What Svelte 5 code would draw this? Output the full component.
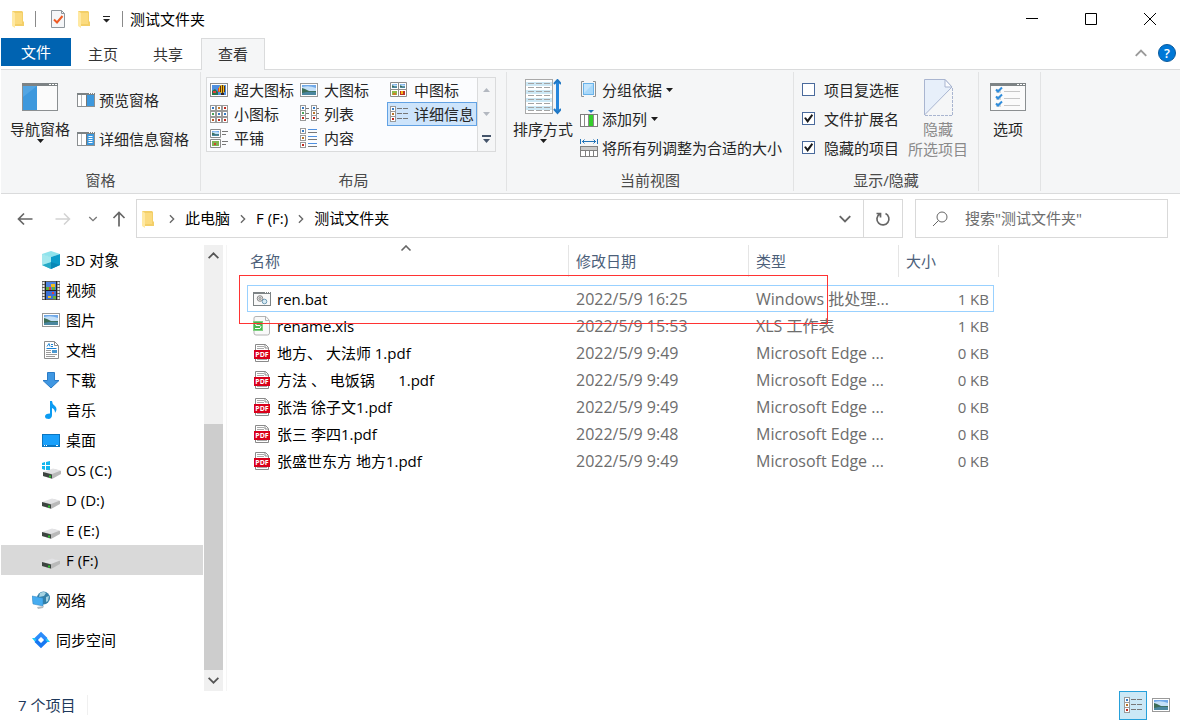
<script lang="ts">
    interface FileRow {
        name: string;
        icon: string;
        date: string;
        type: string;
        size: string;
    }

    const tabs = ["主页", "共享", "查看"];
    const path = ["此电脑", "F (F:)", "测试文件夹"];

    const layouts = [
        { label: "超大图标", icon: "huge" },
        { label: "大图标", icon: "picture" },
        { label: "中图标", icon: "medium" },
        { label: "小图标", icon: "small" },
        { label: "列表", icon: "list" },
        { label: "详细信息", icon: "details" },
        { label: "平铺", icon: "tiles" },
        { label: "内容", icon: "content" }
    ];

    const places = [
        { label: "3D 对象", icon: "cube" },
        { label: "视频", icon: "video" },
        { label: "图片", icon: "picture" },
        { label: "文档", icon: "document" },
        { label: "下载", icon: "download" },
        { label: "音乐", icon: "music" },
        { label: "桌面", icon: "desktop" },
        { label: "OS (C:)", icon: "osdrive" },
        { label: "D (D:)", icon: "drive" },
        { label: "E (E:)", icon: "drive" },
        { label: "F (F:)", icon: "drive" }
    ];

    const roots = [
        { label: "网络", icon: "network" },
        { label: "同步空间", icon: "sync" }
    ];

    const edge = "Microsoft Edge ...";
    const files: FileRow[] = [
        { name: "ren.bat", icon: "bat", date: "2022/5/9 16:25", type: "Windows 批处理...", size: "1 KB" },
        { name: "rename.xls", icon: "xls", date: "2022/5/9 15:53", type: "XLS 工作表", size: "1 KB" },
        { name: "地方、 大法师 1.pdf", icon: "pdf", date: "2022/5/9 9:49", type: edge, size: "0 KB" },
        { name: "方法 、 电饭锅      1.pdf", icon: "pdf", date: "2022/5/9 9:49", type: edge, size: "0 KB" },
        { name: "张浩 徐子文1.pdf", icon: "pdf", date: "2022/5/9 9:49", type: edge, size: "0 KB" },
        { name: "张三 李四1.pdf", icon: "pdf", date: "2022/5/9 9:48", type: edge, size: "0 KB" },
        { name: "张盛世东方 地方1.pdf", icon: "pdf", date: "2022/5/9 9:49", type: edge, size: "0 KB" }
    ];

    let activeTab = $state("查看");
    let activeLayout = $state("详细信息");
    let activePlace = $state("F (F:)");
    let activeFile = $state("ren.bat");

    let options = $state([
        { label: "项目复选框", checked: false },
        { label: "文件扩展名", checked: true },
        { label: "隐藏的项目", checked: true }
    ]);
</script>

{#snippet thumb(x: number, y: number, w: number, h: number)}
    <svg {x} {y} width={w} height={h} viewBox="0 0 14 10" preserveAspectRatio="none">
        <rect width="14" height="10" fill="#6fa8e8" />
        <path d="M0 2 Q7 0 14 3 V6 H0Z" fill="#c4e0f8" />
        <path d="M0 3 L3 4 L7 6 L14 6 V8 H0Z" fill="#3d6e58" />
        <path d="M0 8 Q7 6 14 7 V10 H0Z" fill="#4b87a0" />
    </svg>
{/snippet}

{#snippet mini(x: number, y: number, color: string)}
    <rect x={x + 0.5} y={y + 0.5} width="5" height="5" fill="#fff" stroke="#9a9a9a" />
    <rect x={x + 2} y={y + 2} width="2" height="2" fill={color} />
{/snippet}

{#snippet driveShape()}
    <path d="M0 12 L11 8 L18 10 V13 L9 18 L0 15Z" fill="#b9b9b9" />
    <path d="M0 11 L10 7.500 L18 9.500 L9 13Z" fill="#e2e2e4" />
    <path d="M0 11 L9 13.500 V17.500 L0 15Z" fill="#3c4440" />
    <path d="M6 14.500h2v2h-2z" fill="#2fc22f" />
{/snippet}

{#snippet icon(name: string)}
    {#if name === "folder"}
        <svg width="14" height="18" viewBox="0 0 14 18" aria-hidden="true">
            <path d="M1 1 H11 L12 2 V11 L13 12 V16 H3Z" fill="#f3cf68" />
            <path d="M1 1 L4 3 V18 L1 16Z" fill="#ffe9a3" />
            <path d="M4 3 H11 V14 H4Z" fill="#fbdb7f" />
        </svg>
    {:else if name === "check-page"}
        <svg width="14" height="18" viewBox="0 0 14 18" aria-hidden="true">
            <path d="M0.500 0.500 H10.500 L13.500 3.500 V17.500 H0.500Z" fill="#f5f6f8" stroke="#8f969c" />
            <path d="M10.500 0.500 V3.500 H13.500" fill="none" stroke="#8f969c" />
            <path d="M3 9.500 L6 12.500 L11.500 6" fill="none" stroke="#ee5a24" stroke-width="2" />
        </svg>
    {:else if name === "nav-pane"}
        <svg width="36" height="28" viewBox="0 0 36 28" aria-hidden="true">
            <rect x="0.500" y="0.500" width="35" height="27" fill="#fbfbfb" stroke="#8b8f91" />
            <rect width="36" height="3" fill="#7d8385" />
            <path d="M27 1h2v1h-2zM30 1h2v1h-2zM33 1h2v1h-2z" fill="#fff" />
            <rect x="1" y="3" width="14" height="24" fill="#3d98dd" />
            <path d="M1 3 H15 L1 14Z" fill="#52a5e3" />
        </svg>
    {:else if name === "preview-pane" || name === "details-pane"}
        <svg width="18" height="14" viewBox="0 0 18 14" aria-hidden="true">
            <rect x="0.500" y="0.500" width="17" height="13" fill="#fff" stroke="#8b8f91" />
            <rect width="18" height="2" fill="#7d8385" />
            <path d="M12 0h1v1h-1zM14 0h1v1h-1zM16 0h1v1h-1z" fill="#fff" />
            <path d="M4.500 2v11" stroke="#b5b9bb" />
            <rect x="10" y="2" width="7" height="11" fill="#3d98dd" />
            <path d="M9.500 2v11" stroke="#777" />
            {#if name === "details-pane"}
                <path d="M11.500 4.500h4M11.500 6.500h4M11.500 8.500h4M11.500 10.500h4" stroke="#fff" />
            {/if}
        </svg>
    {:else if name === "huge"}
        <svg width="18" height="14" viewBox="0 0 18 14" aria-hidden="true">
            <rect x="0.500" y="0.500" width="17" height="13" fill="#fff" stroke="#8c8c8c" />
            <rect x="2" y="2" width="14" height="10" fill="#4f8fe0" />
            <path d="M2 8 L5 6 L8 9 V12 H2Z" fill="#28734a" />
            <path d="M3 8h3v2h-3zM8 5h2v4h-2z" fill="#e3413c" />
            <ellipse cx="12" cy="6" rx="3" ry="4" fill="#f6bd12" />
            <path d="M10.500 3v6M12.500 2v8M14.500 3v6" stroke="#5b3210" />
            <path d="M11 10h3v2h-3z" fill="#322" />
        </svg>
    {:else if name === "picture"}
        <svg width="18" height="14" viewBox="0 0 18 14" aria-hidden="true">
            <rect x="0.500" y="0.500" width="17" height="13" fill="#fff" stroke="#999" />
            {@render thumb(2, 2, 14, 10)}
        </svg>
    {:else if name === "medium"}
        <svg width="18" height="16" viewBox="0 0 18 16" aria-hidden="true">
            <path d="M0.500 0.500h8v7h-8zM8.500 0.500h8v7h-8zM0.500 7.500h8v7h-8zM8.500 7.500h8v7h-8z" fill="#fff" stroke="#8c8c8c" />
            {@render thumb(2, 2, 5, 4)}
            {@render thumb(10, 2, 5, 4)}
            <path d="M2 9h5v4h-5z" fill="#8fbb49" />
            <path d="M3 11h3v2h-3z" fill="#d07b2d" />
            <path d="M10 9h5v4h-5z" fill="#bb3326" />
            <path d="M11 9h2v3h-2z" fill="#f4b91c" />
        </svg>
    {:else if name === "small"}
        <svg width="19" height="18" viewBox="0 0 19 18" aria-hidden="true">
            {#each [0, 6, 12] as y, i}
                {@render mini(0, y, ["#377bc4", "#4aa35b", "#b95a2b"][i])}
                {@render mini(6, y, ["#c57a2a", "#377bc4", "#c02b20"][i])}
                {@render mini(12, y, ["#c02b20", "#377bc4", "#c02b20"][i])}
            {/each}
        </svg>
    {:else if name === "list"}
        <svg width="19" height="18" viewBox="0 0 19 18" aria-hidden="true">
            {#each [0, 5, 10] as y, i}
                {@render mini(0, y, ["#377bc4", "#4aa35b", "#c02b20"][i])}
                {@render mini(11, y, ["#377bc4", "#b9762b", "#c02b20"][i])}
            {/each}
            <path d="M6 3.500h3M6 8.500h3M6 13.500h3M17 3.500h2M17 8.500h2M17 13.500h2" stroke="#777" />
        </svg>
    {:else if name === "details"}
        <svg width="18" height="16" viewBox="0 0 18 16" aria-hidden="true">
            {#each [0, 5, 10] as y, i}
                {@render mini(0, y, ["#377bc4", "#b9762b", "#c02b20"][i])}
            {/each}
            <path d="M7 2.500h5M13 2.500h5M7 7.500h5M13 7.500h5M7 12.500h5M13 12.500h5" stroke="#777" />
        </svg>
    {:else if name === "tiles"}
        <svg width="18" height="19" viewBox="0 0 18 19" aria-hidden="true">
            <path d="M0.500 0.500h10v8h-10zM0.500 10.500h10v8h-10z" fill="#fff" stroke="#8c8c8c" />
            {@render thumb(2, 2, 7, 5)}
            <path d="M2 12h7v5h-7z" fill="#7fb452" />
            <path d="M4 14h2v2h-2z" fill="#d0442d" />
            <path d="M12 2.500h6M12 5.500h4M12 12.500h6M12 15.500h4" stroke="#777" />
        </svg>
    {:else if name === "content"}
        <svg width="18" height="20" viewBox="0 0 18 20" aria-hidden="true">
            {#each [0, 7, 14] as y, i}
                {@render mini(0, y, ["#377bc4", "#b9762b", "#c02b20"][i])}
            {/each}
            <path d="M8 1.500h9M8 8.500h9M8 15.500h9" stroke="#4e8fe0" />
            <path d="M8 4.500h9M8 11.500h9M8 18.500h9" stroke="#777" />
        </svg>
    {:else if name === "sort"}
        <svg width="36" height="36" viewBox="0 0 36 36" aria-hidden="true">
            <rect x="0.500" y="0.500" width="27" height="34" fill="#fff" stroke="#a9a9a9" />
            <path d="M1 3h26v4h-26zM1 11h26v4h-26zM1 19h26v4h-26zM1 27h26v4h-26z" fill="#cde8f5" />
            <path d="M3 4.500h22M3 8.500h22M3 12.500h22M3 16.500h22M3 20.500h22M3 24.500h22M3 28.500h22M3 31.500h22" stroke="#a3a3a3" stroke-dasharray="6 2" />
            <path d="M32.500 2v31" stroke="#2686dc" stroke-width="3" />
            <path d="M29 5 L32.500 1 L36 5M29 30 L32.500 34 L36 30" fill="none" stroke="#2178c4" stroke-width="2" />
        </svg>
    {:else if name === "group"}
        <svg width="18" height="17" viewBox="0 0 18 17" aria-hidden="true">
            <path d="M4 0.500H1.500V15.500H4M13 0.500h2.500V15.500H13" fill="none" stroke="#8f9294" />
            <rect x="3.500" y="2.500" width="10" height="11" fill="#a8d8fa" stroke="#69b3ea" />
            <path d="M4 3h9L4 12z" fill="#c3e5fd" />
        </svg>
    {:else if name === "add-column"}
        <svg width="18" height="17" viewBox="0 0 18 17" aria-hidden="true">
            <path d="M8 0h6l-3 3z" fill="#2273b8" />
            <rect x="0.500" y="4.500" width="17" height="12" fill="#fff" stroke="#7d7d7d" />
            <path d="M4.500 5v11M8.500 5v11M13.500 5v11" stroke="#8b8b8b" />
            <rect x="9" y="5" width="4" height="11" fill="#35cf2c" />
        </svg>
    {:else if name === "fit-columns"}
        <svg width="18" height="18" viewBox="0 0 18 18" aria-hidden="true">
            <path d="M0.500 0v5M17.500 0v5M2 2.500h14M4.500 0.500l-2 2l2 2M13.500 0.500l2 2l-2 2" fill="none" stroke="#2273b8" />
            <rect x="0.500" y="7.500" width="17" height="10" fill="#fff" stroke="#808080" />
            <path d="M1 8h16v3H1z" fill="#c9c9c9" />
            <path d="M1 11.500h16M5.500 12v5M9.500 12v5M13.500 12v5" stroke="#808080" />
        </svg>
    {:else if name === "hide"}
        <svg width="29" height="37" viewBox="0 0 29 37" aria-hidden="true">
            <path d="M0.500 36V0.500H21L28 8Z" fill="#e7effa" stroke="#a9b5d0" />
            <path d="M21 0.500V8H28Z" fill="#fafbfe" stroke="#a9b5d0" />
            <path d="M28.500 9V36.500H1" fill="none" stroke="#a9b5d0" stroke-dasharray="3 1" />
        </svg>
    {:else if name === "options"}
        <svg width="36" height="28" viewBox="0 0 36 28" aria-hidden="true">
            <rect x="0.500" y="0.500" width="35" height="27" fill="#fbfbfb" stroke="#8b8f91" />
            <rect width="36" height="3" fill="#7d8385" />
            <path d="M27 1h2v1h-2zM30 1h2v1h-2zM33 1h2v1h-2z" fill="#fff" />
            <path d="M6 6h5v4h-5zM6 13h5v4h-5zM6 20h5v4h-5z" fill="#d3d8dc" />
            <path d="M6 6.500l2 2l4-4M6 13.500l2 2l4-4M6 20.500l2 2l4-4" fill="none" stroke="#2f8ddc" stroke-width="2" />
            <path d="M14 8.500h16M14 15.500h16M14 22.500h16" stroke="#c7c7c7" />
        </svg>
    {:else if name === "cube"}
        <svg width="18" height="18" viewBox="0 0 18 18" aria-hidden="true">
            <path d="M0 3 L9 0 L18 3 L9 6Z" fill="#8fe3ec" />
            <path d="M0 3 L9 6 V18 L0 14Z" fill="#58ccdc" />
            <path d="M9 6 L18 3 V14 L9 18Z" fill="#0c9cc9" />
            <path d="M0 14 L9 11 L9 18Z" fill="#25a9c6" />
            <path d="M9 11 L18 14 L9 18Z" fill="#0888b6" />
            <path d="M0 3 L9 6 L9 11 L0 14Z" fill="#a3e8ee" />
        </svg>
    {:else if name === "video"}
        <svg width="18" height="19" viewBox="0 0 18 19" aria-hidden="true">
            <rect width="18" height="19" fill="#5f5f5f" />
            <rect x="4" y="1" width="10" height="8" fill="#4d82e0" />
            <rect x="4" y="10" width="10" height="8" fill="#3c71d6" />
            <path d="M1.500 1v18M16.500 1v18" stroke="#eee" stroke-width="2" stroke-dasharray="2 1" />
            <path d="M3.500 0v19M14.500 0v19M4 9.500h10" stroke="#222" />
            <path d="M9 3h4v3h-4zM6 15h3v2h-3z" fill="#f1be20" />
            <path d="M4 6h4v3h-4zM10 6h3v3h-3zM11 15h3v3h-3z" fill="#5fae3b" />
            <path d="M7 6h2v3h-2zM10 11h2v2h-2z" fill="#e03f34" />
        </svg>
    {:else if name === "document"}
        <svg width="16" height="18" viewBox="0 0 16 18" aria-hidden="true">
            <path d="M1.500 0.500H11.500L15.500 4.500V17.500H1.500Z" fill="#fff" stroke="#8c8c8c" />
            <path d="M11.500 0.500V4.500H15" fill="none" stroke="#8c8c8c" />
            <path d="M4 5.500l2-3l1 3M8 3.500h2M8 5.500h2M3.500 7.500h10" fill="none" stroke="#1a82d4" />
            <path d="M3 9.500h5M3 11.500h5M3 13.500h11M3 15.500h9" stroke="#9a9a9a" />
            <path d="M9 9h5v3h-5z" fill="#4b98d0" />
        </svg>
    {:else if name === "download"}
        <svg width="18" height="18" viewBox="0 0 18 18" aria-hidden="true">
            <path d="M5.500 1.500h7v8h4.500L9 17L1 9.500h4.500Z" fill="#3f97e2" stroke="#2a7bc6" />
        </svg>
    {:else if name === "music"}
        <svg width="18" height="18" viewBox="0 0 18 18" aria-hidden="true">
            <path d="M8 0h2q0 3 3 5q3 3 0 7q0-4-3-5v7q0 3-3 4q-4 0-4-2.500q0-3 5-3Z" fill="#0c9cf2" />
        </svg>
    {:else if name === "desktop"}
        <svg width="18" height="13" viewBox="0 0 18 13" aria-hidden="true">
            <rect x="0.500" y="0.500" width="17" height="12" fill="#19a0fb" stroke="#0b76c0" />
            <path d="M1 11.500h16" stroke="#0b76c0" />
            <path d="M2 11.500h1M4 11.500h1M14 11.500h2" stroke="#fff" />
        </svg>
    {:else if name === "osdrive"}
        <svg width="19" height="19" viewBox="0 0 19 19" aria-hidden="true">
            <g transform="translate(1 0)">{@render driveShape()}</g>
            <path d="M0 2l3-1v3H0zM4 1l4-1v4H4zM0 5h3v4l-3-1zM4 5h4v4H4z" fill="#12b6ee" />
        </svg>
    {:else if name === "drive"}
        <svg width="18" height="19" viewBox="0 0 18 19" aria-hidden="true">
            {@render driveShape()}
        </svg>
    {:else if name === "network"}
        <svg width="18" height="18" viewBox="0 0 18 18" aria-hidden="true">
            <circle cx="11.500" cy="7" r="6.500" fill="#3580a8" />
            <path d="M8 2q4-2 6 0l-2 3l-5 1zM14 6l3-1l-1 5l-2 1z" fill="#a5d3e2" />
            <path d="M0 5l11 2v8L1 13Z" fill="#46acf0" stroke="#2d82bd" stroke-width="0.500" />
            <path d="M5 16l7-1l-1 2l-5 1z" fill="#b2babf" />
        </svg>
    {:else if name === "sync"}
        <svg width="18" height="18" viewBox="0 0 18 18" aria-hidden="true">
            <path d="M0 7h4l2 3l-2 2zM18 11h-4l-2-3l2-2z" fill="#1fc8f8" />
            <path d="M4 8.500l5-5l5 5" fill="none" stroke="#2b8cfa" stroke-width="4" />
            <path d="M14 9.500l-5 5l-5-5" fill="none" stroke="#1778f2" stroke-width="4" />
            <path d="M9 6l3 3l-3 3l-3-3z" fill="#fff" />
        </svg>
    {:else if name === "bat"}
        <svg width="18" height="14" viewBox="0 0 18 14" aria-hidden="true">
            <rect x="0.500" y="0.500" width="17" height="13" fill="#f9f9f9" stroke="#7d8385" />
            <rect width="18" height="2" fill="#7d8385" />
            <path d="M12 0h1v1h-1zM14 0h1v1h-1zM16 0h1v1h-1z" fill="#fff" />
            <circle cx="7" cy="6.500" r="2.800" fill="#e6e6e6" stroke="#8b8b8b" />
            <circle cx="7" cy="6.500" r="1" fill="#fff" stroke="#888" />
            <circle cx="11.500" cy="9.500" r="2.300" fill="#d7eaf4" stroke="#6e9bb5" />
        </svg>
    {:else if name === "xls"}
        <svg width="18" height="20" viewBox="0 0 18 20" aria-hidden="true">
            <path d="M3 0.500H13L16.500 4.500V17q0 2-2 2H3q-2 0-2-2V2q0-1.500 2-1.500Z" fill="#f9f9f9" stroke="#b3b3b3" />
            <path d="M12.500 1V4.500H16" fill="none" stroke="#b3b3b3" />
            <rect x="0.500" y="5.500" width="9" height="9" fill="#48b64d" stroke="#7ecf80" />
            <path d="M8 7.500H4q-2 0-1 2h4q2 1 0 3H2" fill="none" stroke="#fff" />
        </svg>
    {:else if name === "pdf"}
        <svg width="18" height="18" viewBox="0 0 18 18" aria-hidden="true">
            <path d="M2.500 0.500H12.500L15.500 3.500V17.500H2.500Z" fill="#fff" stroke="#8a8a8a" />
            <path d="M12 0.500V4H15" fill="none" stroke="#8a8a8a" />
            <path d="M4 2.500h7M4 4.500h7M4 15.500h10" stroke="#aaa" />
            <rect x="1" y="6" width="16" height="9" fill="#d9001b" />
            <text x="9" y="13" fill="#fff" font-size="7" font-weight="700" text-anchor="middle">PDF</text>
        </svg>
    {:else if name === "arrow"}
        <svg width="7" height="4" viewBox="0 0 7 4" aria-hidden="true">
            <path d="M0 0h7L3.500 4z" fill="#1d1d1d" />
        </svg>
    {/if}
{/snippet}

{#snippet chevron(turn: string, size: number, color: string)}
    <svg class="chevron {turn}" width={size} height={size} viewBox="0 0 12 12" aria-hidden="true">
        <path d="M1.500 3.500l4.500 4.500l4.500-4.500" fill="none" stroke={color} stroke-width="1.600" />
    </svg>
{/snippet}

<div class="window">
    <header class="titlebar">
        <div class="quick">
            {@render icon("folder")}
            <span class="bar"></span>
            <button aria-label="属性">{@render icon("check-page")}</button>
            <button aria-label="新建文件夹">{@render icon("folder")}</button>
            <button class="customize" aria-label="自定义快速访问工具栏">
                <svg width="7" height="7" viewBox="0 0 7 7" aria-hidden="true">
                    <path d="M0 0h7v1H0zM0 3h7L3.500 6.500z" fill="#222" />
                </svg>
            </button>
            <span class="bar"></span>
        </div>
        <h1>测试文件夹</h1>
        <div class="controls">
            <button aria-label="最小化"><svg width="12" height="12" viewBox="0 0 12 12"><path d="M0 5.500h12" stroke="#000" /></svg></button>
            <button aria-label="最大化"><svg width="12" height="12" viewBox="0 0 12 12"><path d="M0.500 0.500h11v11h-11z" fill="none" stroke="#000" /></svg></button>
            <button aria-label="关闭"><svg width="12" height="12" viewBox="0 0 12 12"><path d="M0 0l12 12M12 0L0 12" stroke="#000" /></svg></button>
        </div>
    </header>

    <nav class="tabs">
        <button class="file-tab">文件</button>
        {#each tabs as tab}
            <button class="tab" class:active={tab === activeTab} onclick={() => (activeTab = tab)}>{tab}</button>
        {/each}
        <div class="help">
            <button aria-label="最小化功能区">{@render chevron("up", 14, "#9a9a9a")}</button>
            <button aria-label="帮助">
                <svg width="18" height="18" viewBox="0 0 18 18">
                    <circle cx="9" cy="9" r="8.500" fill="#0078d7" stroke="#0b5a9c" />
                    <text x="9" y="14" fill="#fff" font-size="13" font-weight="600" text-anchor="middle">?</text>
                </svg>
            </button>
        </div>
    </nav>

    <section class="ribbon">
        <div class="group">
            <div class="tools">
                <button class="big">
                    <span class="pic">{@render icon("nav-pane")}</span>
                    <span>导航窗格</span>
                    {@render icon("arrow")}
                </button>
                <div class="stack tall">
                    <button>{@render icon("preview-pane")}预览窗格</button>
                    <button>{@render icon("details-pane")}详细信息窗格</button>
                </div>
            </div>
            <h2>窗格</h2>
        </div>

        <div class="group">
            <div class="tools layout">
                <div class="gallery">
                    <div class="choices">
                        {#each layouts as item}
                            <button class:active={item.label === activeLayout} onclick={() => (activeLayout = item.label)}>
                                <span class="cell-icon">{@render icon(item.icon)}</span>{item.label}
                            </button>
                        {/each}
                    </div>
                    <div class="steps">
                        <button aria-label="上一行"><svg width="7" height="4" viewBox="0 0 7 4"><path d="M0 4h7L3.500 0z" fill="#b3b8c0" /></svg></button>
                        <button aria-label="下一行"><svg width="7" height="4" viewBox="0 0 7 4"><path d="M0 0h7L3.500 4z" fill="#b3b8c0" /></svg></button>
                        <button aria-label="更多"><svg width="9" height="9" viewBox="0 0 9 9"><path d="M0 1h9v2H0zM1 5h7L4.500 9z" fill="#44546a" /></svg></button>
                    </div>
                </div>
            </div>
            <h2>布局</h2>
        </div>

        <div class="group">
            <div class="tools view">
                <button class="big">
                    <span class="pic">{@render icon("sort")}</span>
                    <span>排序方式</span>
                    {@render icon("arrow")}
                </button>
                <div class="stack">
                    <button>{@render icon("group")}分组依据{@render icon("arrow")}</button>
                    <button>{@render icon("add-column")}添加列{@render icon("arrow")}</button>
                    <button>{@render icon("fit-columns")}将所有列调整为合适的大小</button>
                </div>
            </div>
            <h2>当前视图</h2>
        </div>

        <div class="group">
            <div class="tools show">
                <div class="stack">
                    {#each options as option}
                        <label><input type="checkbox" bind:checked={option.checked} />{option.label}</label>
                    {/each}
                </div>
                <button class="big" disabled>
                    <span class="pic">{@render icon("hide")}</span>
                    <span>隐藏<br />所选项目</span>
                </button>
            </div>
            <h2>显示/隐藏</h2>
        </div>

        <div class="group">
            <div class="tools last">
                <button class="big">
                    <span class="pic">{@render icon("options")}</span>
                    <span>选项</span>
                </button>
            </div>
        </div>
    </section>

    <div class="navbar">
        <div class="history">
            <button aria-label="后退"><svg width="16" height="14" viewBox="0 0 16 14"><path d="M15.500 7H1.500M7 1.500L1.500 7L7 12.500" fill="none" stroke="#666" stroke-width="1.700" /></svg></button>
            <button aria-label="前进"><svg width="16" height="14" viewBox="0 0 16 14"><path d="M0.500 7H14.500M9 1.500L14.500 7L9 12.500" fill="none" stroke="#d2d2d2" stroke-width="1.500" /></svg></button>
            <button class="recent" aria-label="最近浏览的位置">{@render chevron("down", 10, "#777")}</button>
            <button aria-label="上移"><svg width="14" height="16" viewBox="0 0 14 16"><path d="M7 15.500V1.500M1.500 7L7 1.500L12.500 7" fill="none" stroke="#666" stroke-width="1.700" /></svg></button>
        </div>
        <div class="address">
            <span class="root-icon">{@render icon("folder")}</span>
            {#each path as part}
                {@render chevron("right", 10, "#666")}
                <a href="#top">{part}</a>
            {/each}
            <button class="drop" aria-label="以前的位置">{@render chevron("down", 14, "#666")}</button>
            <button class="reload" aria-label="刷新">
                <svg width="16" height="16" viewBox="0 0 16 16">
                    <path d="M10.500 2.500A6 6 0 1 1 4.500 3M1.500 2.500H5.500V6.500" fill="none" stroke="#666" stroke-width="1.700" />
                </svg>
            </button>
        </div>
        <label class="search">
            <svg width="16" height="16" viewBox="0 0 16 16" aria-hidden="true">
                <circle cx="10" cy="6" r="5" fill="none" stroke="#666" />
                <path d="M6.500 9.500L1 15" stroke="#666" />
            </svg>
            <input type="text" aria-label="搜索" placeholder={'搜索"测试文件夹"'} />
        </label>
    </div>

    <main>
        <aside>
            <ul>
                {#each places as place}
                    <li><a href="#top" class:active={place.label === activePlace} onclick={() => (activePlace = place.label)}><span class="cell-icon">{@render icon(place.icon)}</span>{place.label}</a></li>
                {/each}
                {#each roots as root}
                    <li class="root"><a href="#top"><span class="cell-icon">{@render icon(root.icon)}</span>{root.label}</a></li>
                {/each}
            </ul>
            <div class="scrollbar">
                <button aria-label="向上滚动">{@render chevron("up", 13, "#555")}</button>
                <div class="track"><div class="handle"></div></div>
                <button aria-label="向下滚动">{@render chevron("down", 13, "#555")}</button>
            </div>
        </aside>

        <section class="files">
            <table>
                <colgroup>
                    <col class="c-name" />
                    <col class="c-date" />
                    <col class="c-type" />
                    <col class="c-size" />
                    <col class="c-end" />
                </colgroup>
                <thead>
                    <tr>
                        <th class="first">名称<span class="sorted">{@render chevron("up", 12, "#666")}</span></th>
                        <th>修改日期</th>
                        <th>类型</th>
                        <th class="size-head">大小</th>
                        <td class="end"></td>
                    </tr>
                </thead>
                <tbody>
                    {#each files as file}
                        <tr class:selected={file.name === activeFile} onclick={() => (activeFile = file.name)}>
                            <td class="name"><div><span class="cell-icon">{@render icon(file.icon)}</span>{file.name}</div></td>
                            <td class="meta">{file.date}</td>
                            <td class="meta">{file.type}</td>
                            <td class="size">{file.size}</td>
                        </tr>
                    {/each}
                </tbody>
            </table>
            <div class="marker"></div>
        </section>
    </main>

    <footer>
        <span class="count">{files.length} 个项目</span>
        <div class="modes">
            <button class="active" aria-label="详细信息">{@render icon("details")}</button>
            <button aria-label="大缩略图">{@render icon("picture")}</button>
        </div>
    </footer>
</div>

<style>
    :global(body) {
        margin: 0;
        background: #fff;
    }

    .window {
        display: flex;
        flex-direction: column;
        box-sizing: border-box;
        min-height: 100vh;
        padding: 0 1px;
        font: 15px/20px "Open Sans", "Noto Sans CJK SC", sans-serif;
        color: #000;
    }

    button {
        display: flex;
        align-items: center;
        justify-content: center;
        margin: 0;
        padding: 0;
        border: 0;
        background: none;
        color: inherit;
        font: inherit;
        white-space: nowrap;
    }

    a {
        color: inherit;
        text-decoration: none;
    }

    h1, h2 {
        margin: 0;
        font-size: 15px;
        font-weight: 400;
    }

    svg {
        display: block;
        flex: none;
    }

    .up { transform: rotate(180deg); }
    .right { transform: rotate(-90deg); }

    .cell-icon {
        display: flex;
        flex: none;
        align-items: center;
        justify-content: center;
        width: 18px;
    }

    /* title bar */
    .titlebar {
        display: flex;
        align-items: center;
        height: 38px;
    }

    .quick {
        display: flex;
        align-items: center;
        gap: 12px;
        padding-left: 10px;
    }

    .bar {
        width: 1px;
        height: 16px;
        margin: 0 3px 0 -2px;
        background: #8a8a8a;
    }

    .quick .bar:last-child {
        margin: 0;
    }

    h1 {
        padding-left: 7px;
    }

    .controls {
        display: flex;
        align-self: stretch;
        margin-left: auto;
        padding-right: 1px;
    }

    .controls button {
        width: 59px;
    }

    /* tabs */
    .tabs {
        display: flex;
        gap: 1px;
        height: 32px;
        box-sizing: border-box;
        border-bottom: 1px solid #dadbdc;
        color: #333;
    }

    .file-tab {
        height: 28px;
        margin-right: -1px;
        padding: 0 20px;
        background: #0063b1;
        color: #fff;
    }

    .tab {
        box-sizing: border-box;
        height: 32px;
        padding: 0 16px 2px;
        border: 1px solid transparent;
        border-bottom: 0;
    }

    .tab.active {
        border-color: #dadbdc;
        background: #f5f6f7;
    }

    .help {
        display: flex;
        gap: 10px;
        margin-left: auto;
        padding: 0 4px 2px 0;
    }

    /* ribbon */
    .ribbon {
        display: flex;
        height: 123px;
        border-bottom: 1px solid #dadbdc;
        background: #f5f6f7;
        color: #262626;
    }

    .group {
        display: flex;
        flex-direction: column;
        margin: 2px 0;
        border-right: 1px solid #e2e3e4;
    }

    .group h2 {
        padding-bottom: 1px;
        text-align: center;
        color: #4a4a4a;
    }

    .tools {
        display: flex;
        flex: 1;
        gap: 7px;
        padding: 3px 11px 0 9px;
    }

    .tools.layout {
        padding: 5px 10px 0 5px;
    }

    .tools.view {
        padding: 3px 11px 0 6px;
    }

    .tools.show {
        gap: 9px;
        padding: 3px 10px 0 8px;
    }

    .tools.last {
        padding: 3px 14px 0 11px;
    }

    .big {
        flex-direction: column;
        justify-content: flex-start;
        padding-top: 4px;
    }

    .big:disabled {
        color: #8a8a8a;
    }

    .pic {
        display: flex;
        align-items: center;
        justify-content: center;
        width: 36px;
        height: 36px;
        margin-bottom: 4px;
    }

    .stack button, .stack label {
        display: flex;
        align-items: center;
        justify-content: flex-start;
        gap: 4px;
        height: 29px;
    }

    .stack.tall {
        padding-top: 5px;
    }

    .stack.tall button {
        height: 39px;
    }

    .stack label {
        gap: 9px;
    }

    input[type="checkbox"] {
        display: grid;
        place-content: center;
        box-sizing: border-box;
        width: 13px;
        height: 13px;
        margin: 0;
        border: 1px solid #4a6a9c;
        background: #fff;
        appearance: none;
    }

    input[type="checkbox"]:checked::before {
        content: "";
        width: 9px;
        height: 9px;
        background: #1a1a1a;
        clip-path: polygon(0 45%, 20% 35%, 38% 62%, 85% 0, 100% 18%, 40% 100%);
    }

    .gallery {
        display: flex;
        height: 73px;
        border: 1px solid #dadbdc;
        background: #fbfcfe;
    }

    .choices {
        display: grid;
        grid-template-columns: repeat(3, 90px);
        grid-auto-rows: 24px;
    }

    .choices button {
        justify-content: flex-start;
        gap: 6px;
        box-sizing: border-box;
        padding-left: 2px;
        border: 1px solid transparent;
    }

    .choices button.active {
        border-color: #62a2e4;
        background: #cde4fb;
    }

    .steps {
        display: grid;
        grid-template-rows: 1fr 1fr 1fr;
        width: 17px;
        border-left: 1px solid #dadbdc;
        background: #f5f6f7;
    }

    /* address row */
    .navbar {
        display: flex;
        gap: 12px;
        padding: 5px 12px 6px 16px;
    }

    .history {
        display: flex;
        align-items: center;
        gap: 22px;
        margin-right: -2px;
    }

    .recent {
        margin: 0 -8px 0 -5px;
    }

    .address, .search {
        display: flex;
        align-items: center;
        box-sizing: border-box;
        height: 39px;
        border: 1px solid #d9d9d9;
    }

    .address {
        flex: 1;
        gap: 8px;
        padding-left: 4px;
    }

    .address a {
        padding-bottom: 2px;
    }

    .root-icon {
        padding-right: 4px;
    }

    .drop {
        margin-left: auto;
    }

    .reload {
        align-self: stretch;
        width: 39px;
        margin-left: 3px;
        border-left: 1px solid #d9d9d9;
    }

    .search {
        flex: 0 1 253px;
        gap: 17px;
        min-width: 0;
        padding: 0 16px;
    }

    .search input {
        flex: 1;
        min-width: 0;
        padding: 0 0 2px;
        border: 0;
        outline: 0;
        background: none;
        font: inherit;
    }

    .search input::placeholder {
        color: #6d6d6d;
        opacity: 1;
    }

    /* body */
    main {
        display: flex;
        flex: 1;
    }

    aside {
        display: flex;
        margin-top: 1px;
        padding-right: 3px;
        border-right: 1px solid #f5f5f5;
    }

    ul {
        width: 203px;
        margin: 0;
        padding: 0;
        list-style: none;
    }

    li {
        margin-right: 1px;
    }

    li a {
        display: flex;
        align-items: center;
        gap: 6px;
        height: 30px;
        padding-left: 41px;
    }

    li a.active {
        background: #d9d9d9;
    }

    .root {
        margin-top: 10px;
    }

    .root a {
        padding-left: 31px;
    }

    .scrollbar {
        display: flex;
        flex-direction: column;
        width: 19px;
        background: #f0f0f0;
    }

    .scrollbar button {
        height: 21px;
    }

    .track {
        display: flex;
        flex: 1;
        flex-direction: column;
        justify-content: flex-end;
    }

    .handle {
        height: 61%;
        background: #cdcdcd;
    }

    .files {
        position: relative;
        flex: 1;
        margin-top: 1px;
        padding-left: 20px;
    }

    table {
        width: 752px;
        table-layout: fixed;
        border-spacing: 0;
    }

    .c-name { width: 322px; }
    .c-date { width: 180px; }
    .c-type { width: 150px; }
    .c-size { width: 95px; }
    .c-end { width: 5px; }

    th, td {
        box-sizing: border-box;
        padding: 0 0 0 7px;
        overflow: hidden;
        text-align: left;
        white-space: pre;
        font-weight: 400;
    }

    th, thead td {
        height: 32px;
        border-right: 1px solid #e5e5e5;
        color: #4c607a;
    }

    th.first {
        position: relative;
        padding-left: 3px;
    }

    th.size-head {
        border-right: 0;
    }

    .sorted {
        position: absolute;
        top: -3px;
        left: 50%;
        margin-left: -8px;
    }

    thead td.end {
        padding: 0;
    }

    tbody::before {
        content: "";
        display: block;
        height: 8px;
    }

    tbody td {
        height: 27px;
        border: 1px solid transparent;
        border-width: 1px 0;
        color: #6d6d6d;
    }

    td.name {
        padding-left: 5px;
        border-left-width: 1px;
        color: #000;
    }

    td.name div {
        display: flex;
        align-items: center;
        gap: 6px;
    }

    td.meta {
        font-size: 16px;
    }

    td.size {
        padding-right: 4px;
        border-right-width: 1px;
        text-align: right;
    }

    .selected td {
        border-color: #99d1ff;
    }

    /* frame drawn over the first entry */
    .marker {
        position: absolute;
        top: 30px;
        left: 12px;
        box-sizing: border-box;
        width: 589px;
        height: 49px;
        border: 1px solid #f33;
        pointer-events: none;
    }

    footer {
        display: flex;
        align-items: center;
        box-sizing: border-box;
        height: 30px;
        padding-bottom: 2px;
        color: #1e395b;
    }

    .count {
        padding: 0 12px 0 17px;
        border-right: 1px solid #f0f0f0;
    }

    .modes {
        display: flex;
        gap: 5px;
        margin-left: auto;
        padding-right: 10px;
    }

    .modes button {
        box-sizing: border-box;
        height: 29px;
    }

    .modes .active {
        width: 28px;
        border: 1px solid #26a0da;
        background: #cbe8f6;
    }
</style>
